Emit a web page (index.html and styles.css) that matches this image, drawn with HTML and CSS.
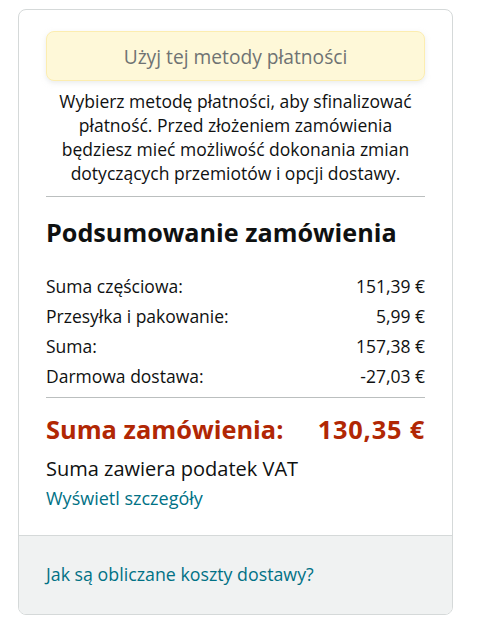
FILE: index.html
```html
<!DOCTYPE html>
<html lang="pl">
<head>
<meta charset="utf-8">
<link rel="stylesheet" href="styles.css">
</head>
<body>
<div class="card">
  <div class="main">
    <div class="btn">Użyj tej metody płatności</div>
    <p class="note">Wybierz metodę płatności, aby sfinalizować płatność. Przed złożeniem zamówienia będziesz mieć możliwość dokonania zmian dotyczących przemiotów i opcji dostawy.</p>
    <hr class="sep">
    <h2 class="title">Podsumowanie zamówienia</h2>
    <div class="rows">
      <div class="row"><span>Suma częściowa:</span><span>151,39 €</span></div>
      <div class="row"><span>Przesyłka i pakowanie:</span><span>5,99 €</span></div>
      <div class="row"><span>Suma:</span><span>157,38 €</span></div>
      <div class="row"><span>Darmowa dostawa:</span><span>-27,03 €</span></div>
    </div>
    <hr class="sep sep2">
    <div class="total"><span>Suma zamówienia:</span><span class="amount">130,35 €</span></div>
    <div class="vat">Suma zawiera podatek VAT</div>
    <a class="link" href="#">Wyświetl szczegóły</a>
  </div>
  <div class="foot">
    <a class="link" href="#">Jak są obliczane koszty dostawy?</a>
  </div>
</div>
</body>
</html>
```

FILE: styles.css
```css
* { box-sizing: border-box; }
body {
  margin: 0;
  background: #fff;
  font-family: "Open Sans", "Noto Sans", sans-serif;
  color: #0f1111;
}
.card {
  margin: 9px 0 0 18px;
  width: 435px;
  height: 606px;
  border: 1px solid #d5d9d9;
  border-radius: 8px;
  overflow: hidden;
  display: flex;
  flex-direction: column;
}
.main {
  padding: 21px 27px 0 27px;
  flex: 1;
}
.btn {
  height: 50px;
  background: #fef8d8;
  border: 1px solid #fcedb0;
  border-radius: 8px;
  box-shadow: 0 2px 5px rgba(213, 217, 217, 0.5);
  color: #6f7373;
  font-size: 19.2px;
  display: flex;
  align-items: center;
  justify-content: center;
}
.note {
  margin: 8px 0 0;
  text-align: center;
  font-size: 17.5px;
  line-height: 24px;
}
.sep {
  margin: 11px 0 0;
  border: 0;
  border-top: 1px solid #bbbfbf;
}
.title {
  margin: 19px 0 0;
  font-size: 25.2px;
  font-weight: 700;
  line-height: 32px;
}
.rows { margin-top: 23px; }
.row {
  display: flex;
  justify-content: space-between;
  font-size: 17.5px;
  line-height: 30px;
}
.sep2 { margin-top: 6px; }
.total {
  margin-top: 15px;
  display: flex;
  justify-content: space-between;
  color: #b12704;
  font-size: 25.4px;
  font-weight: 700;
  line-height: 32px;
}
.amount { letter-spacing: 0.8px; }
.vat {
  margin-top: 11px;
  font-size: 20px;
  line-height: 26px;
}
.link {
  display: block;
  margin-top: 4px;
  color: #007185;
  text-decoration: none;
  font-size: 18px;
  line-height: 24px;
}
.foot {
  height: 79px;
  background: #f0f2f2;
  border-top: 1px solid #d5d9d9;
  padding: 26px 27px 0;
}
.foot .link { margin: 0; font-size: 17.8px; }
```
